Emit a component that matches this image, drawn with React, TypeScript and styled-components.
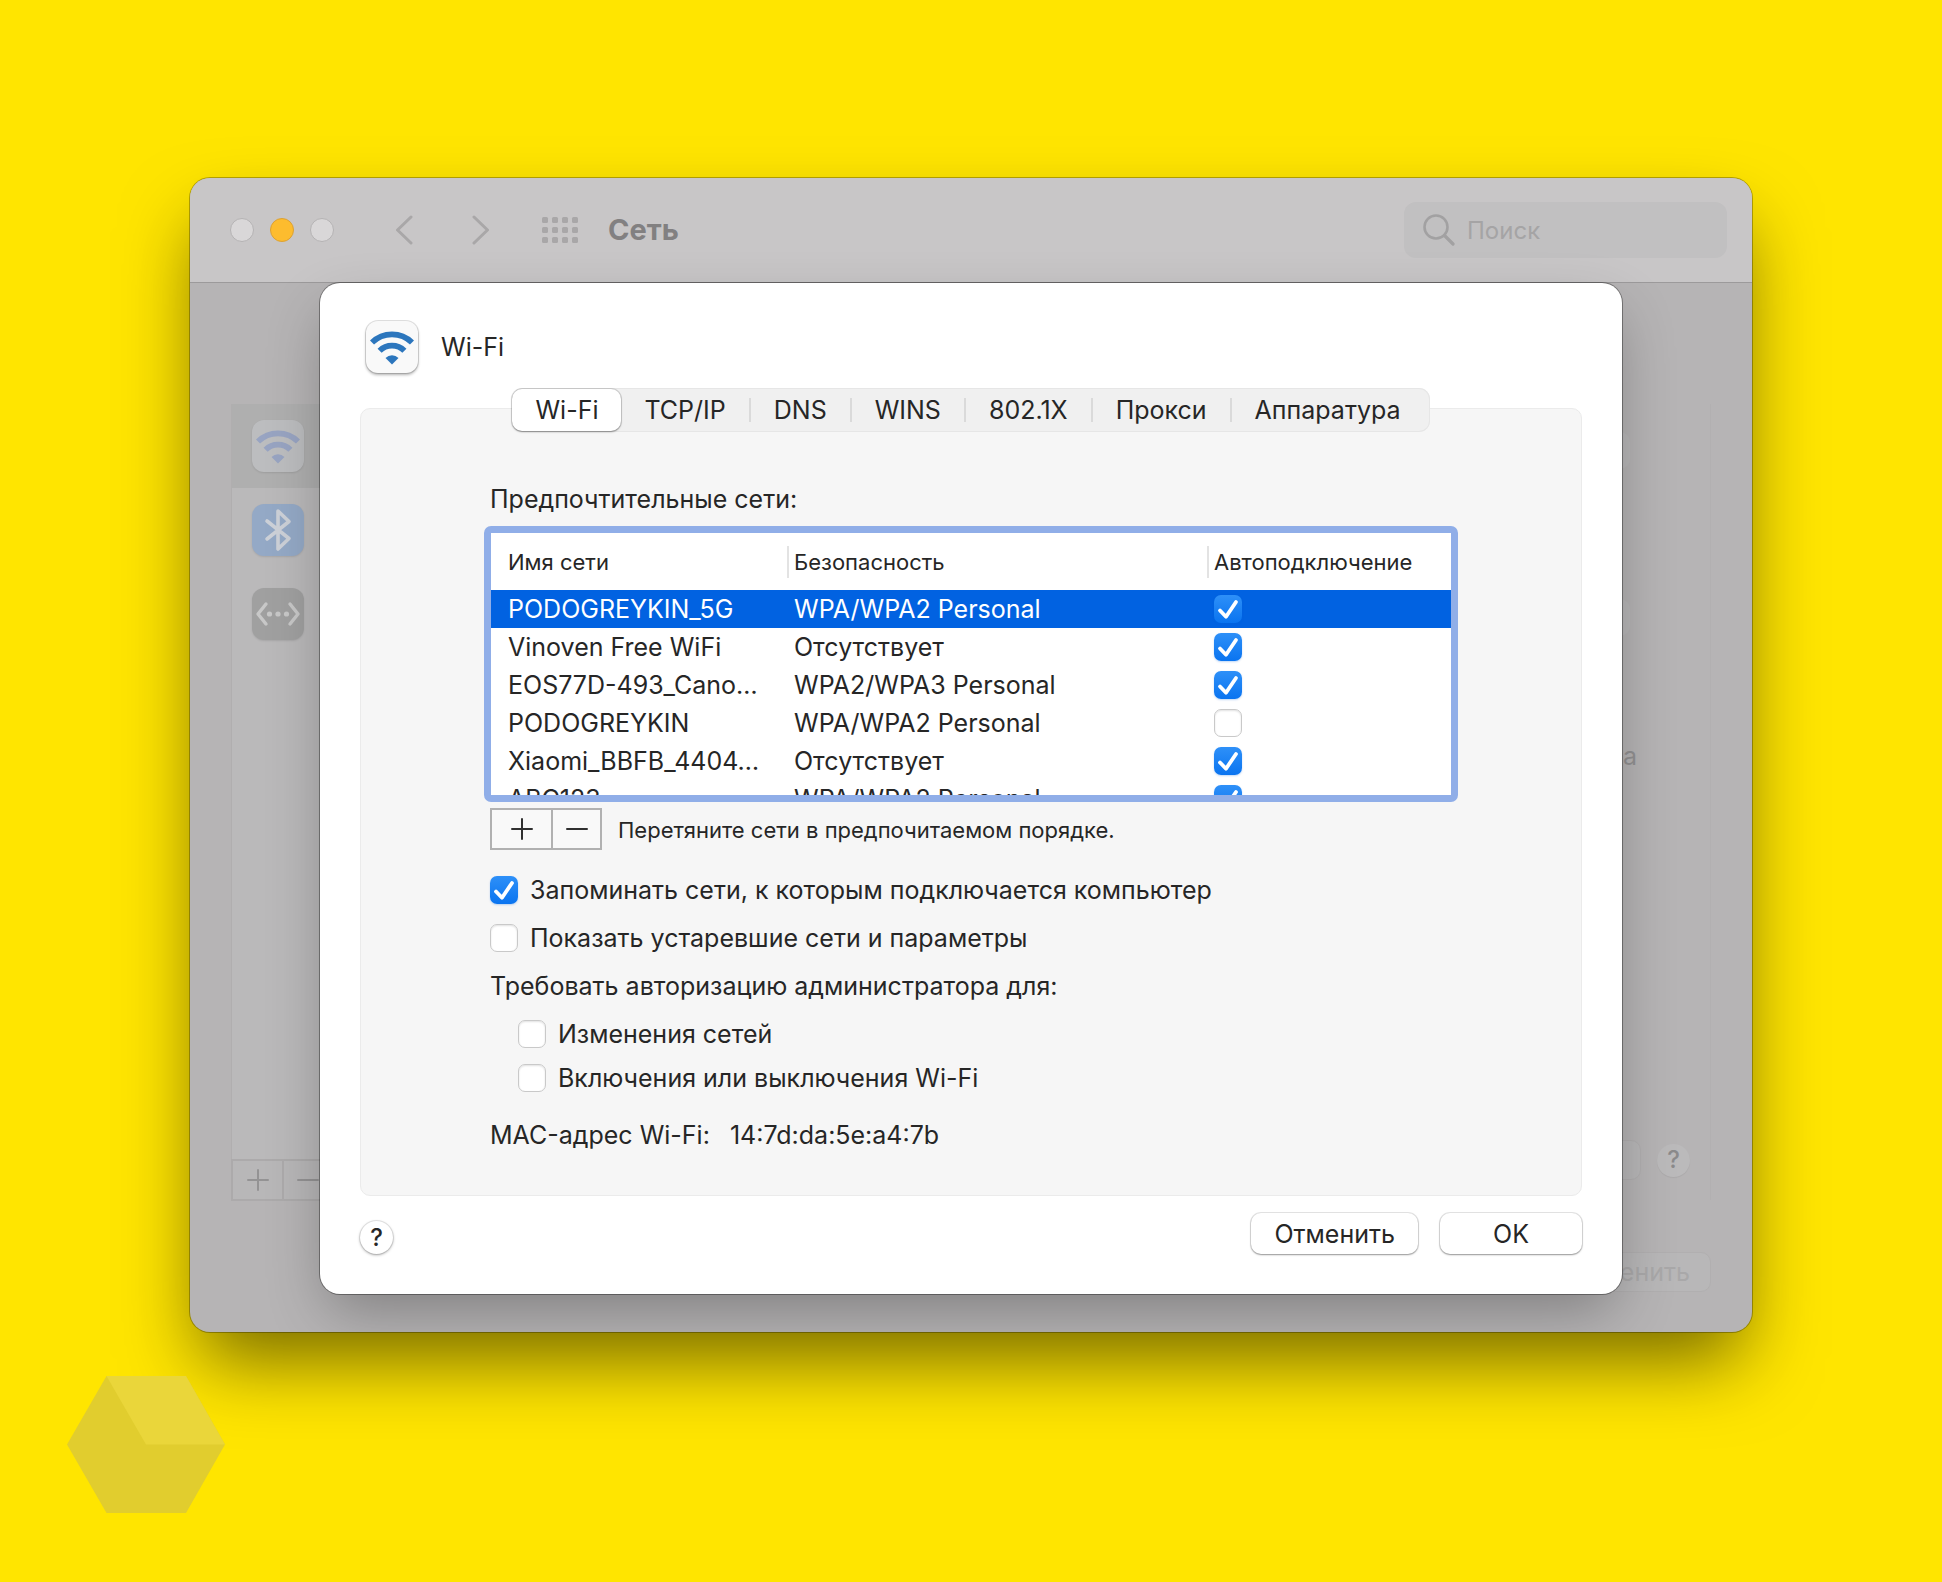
import React, { useState } from "react";
import styled, { createGlobalStyle, css } from "styled-components";

const GlobalStyle = createGlobalStyle`
  *, *::before, *::after { box-sizing: border-box; }
  body {
    margin: 0;
    background: #ffe500;
    font-family: Inter, "Liberation Sans", sans-serif;
    font-size: 25px;
    line-height: 32px;
    color: #262626;
  }
  button, input { font: inherit; color: inherit; }
`;

const Desktop = styled.main`
  position: relative;
  min-height: 100vh;
  padding: 178px 190px 250px;
`;

const Window = styled.section`
  display: flex;
  flex-direction: column;
  overflow: hidden;
  border-radius: 20px;
  background: #b6b4b5;
  box-shadow: 0 0 0 1px rgba(0, 0, 0, 0.28), 0 38px 76px -10px rgba(0, 0, 0, 0.54);
`;

const TitleBar = styled.header`
  display: flex;
  align-items: center;
  height: 105px;
  padding: 0 25px 0 40px;
  border-bottom: 1px solid #9c9a9b;
  background: #c8c6c7;
`;

const Lights = styled.div`
  display: flex;
  gap: 16px;
`;

const Light = styled.button<{ $active?: boolean }>`
  width: 24px;
  height: 24px;
  padding: 0;
  border: 1px solid ${(p) => (p.$active ? "#dca134" : "#b5b3b4")};
  border-radius: 50%;
  background: ${(p) => (p.$active ? "#fdbc2e" : "#d9d7d8")};
`;

const Nav = styled.nav`
  display: flex;
  align-items: center;
  gap: 45px;
  margin-left: 54px;
`;

const IconButton = styled.button`
  display: grid;
  place-items: center;
  min-width: 32px;
  height: 32px;
  padding: 0;
  border: 0;
  background: none;
  color: #a9a7a8;
`;

const WindowTitle = styled.h1`
  margin: 0 auto 0 30px;
  font-size: 29px;
  font-weight: 700;
  color: #828081;
`;

const Search = styled.label`
  display: flex;
  align-items: center;
  gap: 12px;
  width: 323px;
  height: 56px;
  padding: 0 19px;
  border-radius: 12px;
  background: #c1c0c1;
  color: #a2a1a2;
`;

const SearchInput = styled.input`
  flex: 1;
  min-width: 0;
  padding: 2px 0 0;
  border: 0;
  outline: 0;
  background: none;
  font-size: 24px;
  &::placeholder { color: #a5a4a5; opacity: 1; }
`;

const Body = styled.div`
  display: grid;
  grid-template-columns: minmax(0, 1fr);
  > * { grid-area: 1 / 1; }
`;

const Backdrop = styled.div`
  display: flex;
  justify-content: space-between;
  padding: 121px 41px 40px;
`;

const Sidebar = styled.aside`
  display: flex;
  flex-direction: column;
  width: 360px;
  margin-bottom: 91px;
`;

const ServiceList = styled.ul`
  flex: 1;
  margin: 0;
  padding: 0;
  list-style: none;
  border-left: 1px solid #b0aeaf;
  background: #bab9ba;
`;

const Service = styled.li<{ $selected?: boolean }>`
  display: flex;
  align-items: center;
  height: 84px;
  padding: 0 20px;
  background: ${(p) => (p.$selected ? "#afafaf" : "transparent")};
`;

const Tile = styled.span<{ $tone: "plain" | "faded" | "blue" | "grey" }>`
  display: grid;
  place-items: center;
  width: 52px;
  height: 52px;
  border-radius: 12px;
  ${(p) => p.$tone === "plain" && css`
    background: #f9f9f9;
    color: #2c76bd;
    box-shadow: 0 0 0 1px rgba(0, 0, 0, 0.12), 0 2px 3px rgba(0, 0, 0, 0.3);
  `}
  ${(p) => p.$tone === "faded" && css`
    background: #bcbdbf;
    color: #98a4c2;
    box-shadow: 0 1px 2px rgba(0, 0, 0, 0.1);
  `}
  ${(p) => p.$tone === "blue" && css`
    background: #94a9c6;
    color: #cdd1d8;
    box-shadow: 0 1px 2px rgba(0, 0, 0, 0.1);
  `}
  ${(p) => p.$tone === "grey" && css`
    background: #a0a0a0;
    color: #c8c8c8;
    box-shadow: 0 1px 2px rgba(0, 0, 0, 0.1);
  `}
`;

const Stepper = styled.div<{ $faded?: boolean }>`
  display: flex;
  width: max-content;
  height: 42px;
  border: 2px solid ${(p) => (p.$faded ? "#acaaab" : "#b1b1b1")};
  background: ${(p) => (p.$faded ? "#b8b7b8" : "#f9f9f9")};
  color: ${(p) => (p.$faded ? "#949394" : "#303030")};
`;

const StepButton = styled.button<{ $wide?: boolean }>`
  display: grid;
  place-items: center;
  width: ${(p) => (p.$wide ? 59 : 49)}px;
  padding: 0;
  border: 0 solid;
  border-color: inherit;
  background: none;
  & + & { border-left-width: 2px; }
`;

const Details = styled.div`
  display: flex;
  flex-direction: column;
  align-items: flex-end;
  gap: 52px;
`;

const DetailsBox = styled.div`
  display: flex;
  flex: 1;
  flex-direction: column;
  align-items: flex-end;
  width: 420px;
  padding: 28px 20px 20px 0;
  border-right: 1px solid #b2b0b1;
`;

const ControlEdge = styled.div`
  width: 200px;
  height: 37px;
  margin: 0 60px 130px 0;
  border-radius: 10px;
  background: #b9b8b9;
`;

const DetailsNote = styled.p`
  margin: -26px 53px auto 0;
  color: #929192;
`;

const DetailsFooter = styled.div`
  display: flex;
  align-items: center;
  gap: 16px;
`;

const FadedButton = styled.button`
  min-width: 160px;
  height: 40px;
  padding: 0 20px;
  border: 1px solid #b1afb0;
  border-radius: 10px;
  background: #b8b7b8;
  color: #a9a8a9;
`;

const HelpButton = styled.button<{ $faded?: boolean }>`
  display: grid;
  place-items: center;
  width: 33px;
  height: 33px;
  padding: 0;
  border: 0;
  border-radius: 50%;
  font-size: 24px;
  font-weight: 500;
  ${(p) => p.$faded ? css`
    background: #bbbabb;
    color: #8b8a8b;
    box-shadow: 0 1px 1px rgba(0, 0, 0, 0.06);
  ` : css`
    background: #fff;
    box-shadow: 0 0 0 1px rgba(0, 0, 0, 0.08), 0 1px 3px rgba(0, 0, 0, 0.35);
  `}
`;

const Sheet = styled.section`
  z-index: 1;
  display: flex;
  flex-direction: column;
  margin: 0 130px 38px;
  padding: 38px 40px 40px;
  border-radius: 20px;
  background: #fff;
  box-shadow: 0 0 0 1px rgba(0, 0, 0, 0.35), 0 24px 60px -8px rgba(0, 0, 0, 0.3);
`;

const SheetHeader = styled.header`
  display: flex;
  align-items: center;
  gap: 23px;
  padding: 0 6px 15px;
`;

const SheetTitle = styled.h2`
  margin: 0;
  font-size: 25px;
  font-weight: 400;
`;

const TabBar = styled.div`
  z-index: 1;
  display: flex;
  align-self: center;
  align-items: center;
  height: 44px;
  margin-bottom: -24px;
  padding-right: 6px;
  border-radius: 11px;
  background: #f0f0f0;
  box-shadow: inset 0 0 0 1px #e6e6e6;
`;

const Tab = styled.button<{ $selected?: boolean }>`
  height: 42px;
  padding: 0 23px;
  border: 0;
  border-radius: 10px;
  background: none;
  ${(p) => p.$selected && css`
    background: #fff;
    box-shadow: 0 0 0 1px rgba(0, 0, 0, 0.12), 0 1px 2px rgba(0, 0, 0, 0.35);
  `}
`;

const TabDivider = styled.span`
  width: 2px;
  height: 24px;
  background: #dadada;
`;

const Panel = styled.div`
  padding: 74px 129px 44px;
  border: 1px solid #ebebeb;
  border-radius: 10px;
  background: #f6f6f6;
`;

const PanelLabel = styled.p`
  margin: 0;
`;

const TableFrame = styled.div`
  height: 276px;
  margin: 11px -6px 6px;
  overflow: hidden;
  border: 7px solid #90aee8;
  border-radius: 7px;
  background: #fff;
`;

const Table = styled.table`
  width: 100%;
  table-layout: fixed;
  border-collapse: collapse;
`;

const HeadCell = styled.th<{ $width?: string }>`
  width: ${(p) => p.$width ?? "auto"};
  height: 57px;
  padding: 0;
  font-size: 22px;
  font-weight: 400;
  text-align: left;
`;

const HeadLabel = styled.span<{ $first?: boolean }>`
  display: block;
  padding-left: ${(p) => (p.$first ? 17 : 5)}px;
  border-left: ${(p) => (p.$first ? "0" : "2px solid #e3e3e3")};
`;

const Row = styled.tr<{ $selected?: boolean }>`
  background: ${(p) => (p.$selected ? "#0162e1" : "transparent")};
  color: ${(p) => (p.$selected ? "#fff" : "inherit")};
`;

const Cell = styled.td<{ $first?: boolean }>`
  height: 38px;
  padding: 0 0 0 ${(p) => (p.$first ? 17 : 7)}px;
  overflow: hidden;
  white-space: nowrap;
`;

const CheckBox = styled.span`
  display: grid;
  width: 28px;
  height: 28px;
  > * { grid-area: 1 / 1; }
  > svg { pointer-events: none; color: #fff; }
`;

const CheckInput = styled.input`
  appearance: none;
  width: 28px;
  height: 28px;
  margin: 0;
  border: 1px solid #c9c9c9;
  border-radius: 7px;
  background: #fff;
  box-shadow: inset 0 1px 2px rgba(0, 0, 0, 0.12);
  &:checked {
    border: 0;
    background: linear-gradient(#2e90f8, #0a74f0);
    box-shadow: 0 1px 2px rgba(0, 100, 220, 0.25);
  }
`;

const ListActions = styled.div`
  display: flex;
  align-items: center;
  gap: 16px;
  margin-bottom: 24px;
`;

const Hint = styled.span`
  padding-top: 2px;
  font-size: 22px;
`;

const Options = styled.div`
  display: flex;
  flex-direction: column;
  gap: 16px;
`;

const Option = styled.label`
  display: flex;
  align-items: center;
  gap: 12px;
  width: max-content;
`;

const SubOptions = styled.div`
  display: flex;
  flex-direction: column;
  gap: 12px;
  padding-left: 28px;
`;

const Address = styled.p`
  display: flex;
  gap: 20px;
  margin: 25px 0 0;
`;

const SheetFooter = styled.footer`
  display: flex;
  align-items: flex-end;
  gap: 22px;
  padding-top: 17px;
`;

const Spacer = styled.span`
  flex: 1;
`;

const PushButton = styled.button`
  min-width: 142px;
  height: 41px;
  padding: 0 23px;
  border: 0;
  border-radius: 10px;
  background: #fff;
  box-shadow: 0 0 0 1px rgba(0, 0, 0, 0.1), 0 1px 2px rgba(0, 0, 0, 0.35);
`;

const Watermark = styled.svg`
  position: absolute;
  bottom: 69px;
  left: 67px;
`;

const WifiIcon = () => (
  <svg width="44" height="36" viewBox="0 0 44 36" fill="none" stroke="currentColor" strokeWidth="5.8" aria-hidden="true">
    <path d="M2 13.500a28.500 28.500 0 0 1 40 0" />
    <path d="M9.600 21.700a17.600 17.600 0 0 1 24.800 0" />
    <path d="M22 35.500l-6.500-6.500a9.200 9.200 0 0 1 13 0z" fill="currentColor" stroke="none" />
  </svg>
);

const BluetoothIcon = () => (
  <svg width="28" height="44" viewBox="0 0 28 44" fill="none" stroke="currentColor" strokeWidth="3.6" strokeLinecap="round" strokeLinejoin="round" aria-hidden="true">
    <path d="M3 13l22 17.500L14 41V3l11 10.500L3 31" />
  </svg>
);

const EthernetIcon = () => (
  <svg width="46" height="26" viewBox="0 0 46 26" fill="none" stroke="currentColor" strokeWidth="3.4" strokeLinecap="round" strokeLinejoin="round" aria-hidden="true">
    <path d="M11 3L3 13l8 10M35 3l8 10-8 10" />
    <g fill="currentColor" stroke="none">
      <circle cx="14.5" cy="13" r="2.6" />
      <circle cx="23" cy="13" r="2.6" />
      <circle cx="31.5" cy="13" r="2.6" />
    </g>
  </svg>
);

const Chevron = ({ forward }: { forward?: boolean }) => (
  <svg width="18" height="30" viewBox="0 0 18 30" fill="none" stroke="currentColor" strokeWidth="3" strokeLinecap="round" strokeLinejoin="round" aria-hidden="true">
    <path d={forward ? "M2 2l13.500 13L2 28" : "M16 2L2.500 15 16 28"} />
  </svg>
);

const GridIcon = () => (
  <svg width="36" height="26" viewBox="0 0 36 26" fill="currentColor" aria-hidden="true">
    {[0, 10, 20].map((y) =>
      [0, 10, 20, 30].map((x) => <rect key={`${x}-${y}`} x={x} y={y} width="6" height="6" rx="1.5" />)
    )}
  </svg>
);

const SearchIcon = () => (
  <svg width="32" height="32" viewBox="0 0 32 32" fill="none" stroke="currentColor" strokeWidth="2.6" strokeLinecap="round" aria-hidden="true">
    <circle cx="13" cy="13" r="11.5" />
    <path d="M21.500 21.500l8.500 8.500" strokeWidth="3.2" />
  </svg>
);

const PlusIcon = () => (
  <svg width="22" height="22" viewBox="0 0 22 22" stroke="currentColor" strokeWidth="2" strokeLinecap="round" aria-hidden="true">
    <path d="M1 11h20M11 1v20" />
  </svg>
);

const MinusIcon = () => (
  <svg width="22" height="22" viewBox="0 0 22 22" stroke="currentColor" strokeWidth="2" strokeLinecap="round" aria-hidden="true">
    <path d="M1 11h20" />
  </svg>
);

type CheckProps = { id?: string; label?: string; initial?: boolean };

function Check({ id, label, initial = false }: CheckProps) {
  const [on, setOn] = useState(initial);
  return (
    <CheckBox>
      <CheckInput type="checkbox" id={id} aria-label={label} checked={on} onChange={() => setOn(!on)} />
      {on && (
        <svg width="28" height="28" viewBox="0 0 28 28" fill="none" stroke="currentColor" strokeWidth="3.8" strokeLinecap="round" strokeLinejoin="round" aria-hidden="true">
          <path d="M6 15.500l6 6.200L22 7" />
        </svg>
      )}
    </CheckBox>
  );
}

const tabs = ["Wi-Fi", "TCP/IP", "DNS", "WINS", "802.1X", "Прокси", "Аппаратура"];

const networks = [
  { name: "PODOGREYKIN_5G", security: "WPA/WPA2 Personal", auto: true },
  { name: "Vinoven Free WiFi", security: "Отсутствует", auto: true },
  { name: "EOS77D-493_Cano…", security: "WPA2/WPA3 Personal", auto: true },
  { name: "PODOGREYKIN", security: "WPA/WPA2 Personal", auto: false },
  { name: "Xiaomi_BBFB_4404…", security: "Отсутствует", auto: true },
  { name: "ABC123", security: "WPA/WPA2 Personal", auto: true },
];

export default function App() {
  const [tab, setTab] = useState(0);
  const [picked, setPicked] = useState(0);

  return (
    <>
      <GlobalStyle />
      <Desktop>
        <Window>
          <TitleBar>
            <Lights>
              <Light aria-label="Закрыть" />
              <Light $active aria-label="Свернуть" />
              <Light aria-label="Развернуть" />
            </Lights>
            <Nav>
              <IconButton aria-label="Назад"><Chevron /></IconButton>
              <IconButton aria-label="Вперёд"><Chevron forward /></IconButton>
              <IconButton aria-label="Все настройки"><GridIcon /></IconButton>
            </Nav>
            <WindowTitle>Сеть</WindowTitle>
            <Search>
              <SearchIcon />
              <SearchInput type="search" placeholder="Поиск" aria-label="Поиск" />
            </Search>
          </TitleBar>

          <Body>
            <Backdrop>
              <Sidebar>
                <ServiceList>
                  <Service $selected><Tile $tone="faded"><WifiIcon /></Tile></Service>
                  <Service><Tile $tone="blue"><BluetoothIcon /></Tile></Service>
                  <Service><Tile $tone="grey"><EthernetIcon /></Tile></Service>
                </ServiceList>
                <Stepper $faded>
                  <StepButton aria-label="Добавить службу"><PlusIcon /></StepButton>
                  <StepButton aria-label="Удалить службу"><MinusIcon /></StepButton>
                </Stepper>
              </Sidebar>
              <Details>
                <DetailsBox>
                  <ControlEdge />
                  <ControlEdge />
                  <DetailsNote>а</DetailsNote>
                  <DetailsFooter>
                    <FadedButton aria-label="Дополнительно" />
                    <HelpButton $faded>?</HelpButton>
                  </DetailsFooter>
                </DetailsBox>
                <FadedButton>Применить</FadedButton>
              </Details>
            </Backdrop>

            <Sheet role="dialog" aria-labelledby="sheet-title">
              <SheetHeader>
                <Tile $tone="plain"><WifiIcon /></Tile>
                <SheetTitle id="sheet-title">Wi-Fi</SheetTitle>
              </SheetHeader>

              <TabBar role="tablist">
                {tabs.map((name, i) => (
                  <React.Fragment key={name}>
                    {i > 0 && i !== tab && i - 1 !== tab && <TabDivider />}
                    <Tab role="tab" aria-selected={i === tab} $selected={i === tab} onClick={() => setTab(i)}>
                      {name}
                    </Tab>
                  </React.Fragment>
                ))}
              </TabBar>

              <Panel>
                <PanelLabel id="networks-label">Предпочтительные сети:</PanelLabel>
                <TableFrame>
                  <Table aria-labelledby="networks-label">
                    <thead>
                      <tr>
                        <HeadCell $width="296px"><HeadLabel $first>Имя сети</HeadLabel></HeadCell>
                        <HeadCell $width="420px"><HeadLabel>Безопасность</HeadLabel></HeadCell>
                        <HeadCell><HeadLabel>Автоподключение</HeadLabel></HeadCell>
                      </tr>
                    </thead>
                    <tbody>
                      {networks.map((n, i) => (
                        <Row key={n.name} $selected={i === picked} onClick={() => setPicked(i)}>
                          <Cell $first>{n.name}</Cell>
                          <Cell>{n.security}</Cell>
                          <Cell><Check label={`Автоподключение ${n.name}`} initial={n.auto} /></Cell>
                        </Row>
                      ))}
                    </tbody>
                  </Table>
                </TableFrame>

                <ListActions>
                  <Stepper>
                    <StepButton $wide aria-label="Добавить сеть"><PlusIcon /></StepButton>
                    <StepButton aria-label="Удалить сеть"><MinusIcon /></StepButton>
                  </Stepper>
                  <Hint>Перетяните сети в предпочитаемом порядке.</Hint>
                </ListActions>

                <Options>
                  <Option htmlFor="remember"><Check id="remember" initial />Запоминать сети, к которым подключается компьютер</Option>
                  <Option htmlFor="legacy"><Check id="legacy" />Показать устаревшие сети и параметры</Option>
                  <PanelLabel>Требовать авторизацию администратора для:</PanelLabel>
                  <SubOptions>
                    <Option htmlFor="change"><Check id="change" />Изменения сетей</Option>
                    <Option htmlFor="power"><Check id="power" />Включения или выключения Wi-Fi</Option>
                  </SubOptions>
                </Options>

                <Address>
                  <span>MAC-адрес Wi-Fi:</span>
                  <span>14:7d:da:5e:a4:7b</span>
                </Address>
              </Panel>

              <SheetFooter>
                <HelpButton aria-label="Справка">?</HelpButton>
                <Spacer />
                <PushButton>Отменить</PushButton>
                <PushButton>OK</PushButton>
              </SheetFooter>
            </Sheet>
          </Body>
        </Window>

        <Watermark width="158" height="137" viewBox="0 0 158 137" aria-hidden="true">
          <path d="M39.500 0H119L158 68.500 119 137H39.500L0 68.500z" fill="#e1cd2e" />
          <path d="M39.500 0H119L158 68.500H79z" fill="#ead63a" />
        </Watermark>
      </Desktop>
    </>
  );
}
